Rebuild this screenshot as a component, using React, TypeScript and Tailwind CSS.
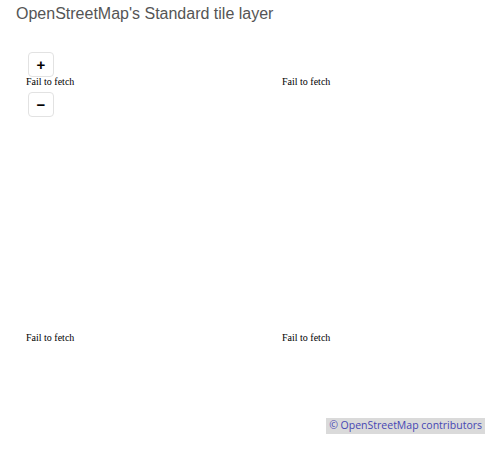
import React from "react";

const tiles = [
  { x: 8, y: 34 },
  { x: 264, y: 34 },
  { x: 8, y: 290 },
  { x: 264, y: 290 },
];

export default function App() {
  return (
    <div className="w-[500px] h-[450px] bg-white overflow-hidden">
      <div className="pl-4 pt-[5px] text-[16px] leading-[18px] text-[#555] font-['Liberation_Sans',Arial,sans-serif]">
        OpenStreetMap's Standard tile layer
      </div>
      <div className="relative ml-[18px] mt-[19px] w-[467px] h-[392px] overflow-hidden bg-white">
        {tiles.map((t, i) => (
          <div
            key={i}
            className="absolute w-[256px] h-[256px] text-[10px] leading-[11px] text-black font-['Liberation_Serif','Times_New_Roman',serif]"
            style={{ left: t.x, top: t.y }}
          >
            Fail to fetch
          </div>
        ))}
        <div className="absolute left-[10px] top-[10px] flex flex-col gap-[15px]">
          <button className="w-[26px] h-[25px] flex items-center justify-center bg-white border border-[#e2e2e2] rounded-[4px] text-black text-[15px] font-bold leading-none font-['Liberation_Sans',sans-serif]">
            +
          </button>
          <button className="w-[26px] h-[25px] flex items-center justify-center bg-white border border-[#e2e2e2] rounded-[4px] text-black text-[15px] font-bold leading-none font-['Liberation_Sans',sans-serif]">
            −
          </button>
        </div>
        <div className="absolute right-0 bottom-0 bg-[#dadada] px-[3px] h-[16px] flex items-center text-[10.5px] text-[#4646b4] font-['Open_Sans',sans-serif]">
          © OpenStreetMap contributors
        </div>
      </div>
    </div>
  );
}
